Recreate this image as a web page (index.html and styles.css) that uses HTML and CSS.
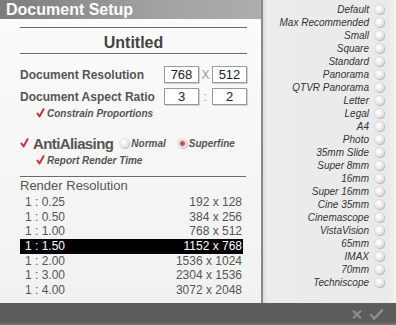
FILE: index.html
```html
<!DOCTYPE html>
<html lang="en">
<head>
<meta charset="UTF-8" />
<title>Document Setup</title>
<link rel="stylesheet" href="styles.css">
</head>
<body>
<div class="window">
  <div class="left">
    <div class="titlebar">Document Setup</div>
    <div class="setup">
      <div class="rule"></div>
      <div class="doc-name">Untitled</div>
      <div class="rule"></div>

      <div class="field-row first">
        <span class="label">Document Resolution</span>
        <span class="box">768</span>
        <span class="sep">X</span>
        <span class="box">512</span>
      </div>
      <div class="field-row">
        <span class="label">Document Aspect Ratio</span>
        <span class="box">3</span>
        <span class="sep">:</span>
        <span class="box">2</span>
      </div>
      <div class="option sub">
        <svg class="check" viewBox="0 0 9 10"><path d="M1.5 5.5 L3.5 8.5 L7.5 1.2"/></svg>
        <span>Constrain Proportions</span>
      </div>

      <div class="aa-row">
        <svg class="check" viewBox="0 0 9 10"><path d="M1.5 5.5 L3.5 8.5 L7.5 1.2"/></svg>
        <span class="aa-label">AntiAliasing</span>
        <span class="radio"></span><span class="opt">Normal</span>
        <span class="radio on"></span><span class="opt">Superfine</span>
      </div>
      <div class="option sub">
        <svg class="check" viewBox="0 0 9 10"><path d="M1.5 5.5 L3.5 8.5 L7.5 1.2"/></svg>
        <span>Report Render Time</span>
      </div>

      <div class="rule low"></div>
      <div class="res-title">Render Resolution</div>
      <ul class="res-list">
        <li><span>1 : 0.25</span><span>192 x 128</span></li>
        <li><span>1 : 0.50</span><span>384 x 256</span></li>
        <li><span>1 : 1.00</span><span>768 x 512</span></li>
        <li class="selected"><span>1 : 1.50</span><span>1152 x 768</span></li>
        <li><span>1 : 2.00</span><span>1536 x 1024</span></li>
        <li><span>1 : 3.00</span><span>2304 x 1536</span></li>
        <li><span>1 : 4.00</span><span>3072 x 2048</span></li>
      </ul>
    </div>
  </div>

  <ul class="presets">
    <li>Default<span class="radio"></span></li>
    <li>Max Recommended<span class="radio"></span></li>
    <li>Small<span class="radio"></span></li>
    <li>Square<span class="radio"></span></li>
    <li>Standard<span class="radio"></span></li>
    <li>Panorama<span class="radio"></span></li>
    <li>QTVR Panorama<span class="radio"></span></li>
    <li>Letter<span class="radio"></span></li>
    <li>Legal<span class="radio"></span></li>
    <li>A4<span class="radio"></span></li>
    <li>Photo<span class="radio"></span></li>
    <li>35mm Slide<span class="radio"></span></li>
    <li>Super 8mm<span class="radio"></span></li>
    <li>16mm<span class="radio"></span></li>
    <li>Super 16mm<span class="radio"></span></li>
    <li>Cine 35mm<span class="radio"></span></li>
    <li>Cinemascope<span class="radio"></span></li>
    <li>VistaVision<span class="radio"></span></li>
    <li>65mm<span class="radio"></span></li>
    <li>IMAX<span class="radio"></span></li>
    <li>70mm<span class="radio"></span></li>
    <li>Techniscope<span class="radio"></span></li>
  </ul>

  <div class="footer">
    <svg class="btn-icon" viewBox="0 0 12 12"><path d="M2 2 L10 10 M10 2 L2 10"/></svg>
    <svg class="btn-icon ok" viewBox="0 0 16 12"><path d="M2 6.5 L5.5 10.5 L14 1.5"/></svg>
  </div>
</div>
</body>
</html>
```

FILE: styles.css
```css
/* Base */
* {
  box-sizing: border-box;
}
body {
  margin: 0;
  width: 396px;
  height: 325px;
  overflow: hidden;
  font-family: "Liberation Sans", Arial, sans-serif;
  background: #5b5b5b;
}
ul {
  list-style: none;
  margin: 0;
  padding: 0;
}
.window {
  display: grid;
  grid-template-columns: 263px 133px;
  grid-template-rows: 303px 22px;
  height: 325px;
}

/* Left column */
.left {
  display: flex;
  flex-direction: column;
  border-right: 2px solid #8a8a8a;
}
.titlebar {
  height: 19px;
  line-height: 20px;
  padding-left: 6px;
  color: #fff;
  font-size: 16px;
  font-weight: 700;
  background: linear-gradient(90deg, #7c7c7c, #a2a2a2 60%, #adadad);
}
.setup {
  flex: 1;
  padding: 8px 14px 0 20px;
  background: linear-gradient(180deg, #fbfbfb, #f1f1f1);
  color: #555;
}
.rule {
  height: 1px;
  background: #6a6a6a;
  box-shadow: 0 1px 0 #fff;
}
.doc-name {
  height: 25px;
  padding-top: 5px;
  text-align: center;
  font-size: 16px;
  font-weight: 700;
  line-height: 20px;
  color: #444;
}

.field-row {
  display: flex;
  align-items: center;
  height: 17px;
  margin-top: 5px;
}
.field-row.first {
  margin-top: 12px;
}
.label {
  flex: 1;
  font-size: 12px;
  font-weight: 700;
}
.box {
  width: 35px;
  height: 17px;
  line-height: 15px;
  text-align: center;
  font-size: 13px;
  color: #222;
  background: #fff;
  border: 1px solid #9a9a9a;
  box-shadow: 1px 1px 0 #d0d0d0;
}
.sep {
  width: 13px;
  text-align: center;
  font-size: 12px;
  color: #999;
}

.option {
  display: flex;
  align-items: center;
  height: 14px;
  font-size: 10px;
  font-weight: 700;
  font-style: italic;
}
.option.sub {
  padding-left: 16px;
  margin-top: 1px;
}
.check {
  width: 9px;
  height: 10px;
  margin-right: 2px;
  fill: none;
  stroke: #c4323f;
  stroke-width: 2;
  stroke-linecap: round;
  stroke-linejoin: round;
}
.aa-row {
  display: flex;
  align-items: center;
  height: 18px;
  margin-top: 14px;
}
.aa-row .check {
  margin-right: 4px;
}
.aa-label {
  font-size: 15px;
  font-weight: 700;
  letter-spacing: -0.6px;
  margin-right: 7px;
}
.opt {
  font-size: 10px;
  font-weight: 700;
  font-style: italic;
  margin: 0 12px 0 2px;
}

.rule.low {
  margin-top: 9px;
  margin-right: 1px;
}
.res-title {
  height: 18px;
  line-height: 18px;
  font-size: 13px;
}
.res-list {
  margin-right: 4px;
}
.res-list li {
  display: flex;
  justify-content: space-between;
  height: 14.7px;
  line-height: 15px;
  padding: 0 1px 0 5px;
  font-size: 12px;
  color: #555;
}
.res-list li.selected {
  background: #000;
  color: #fff;
}

/* Radio buttons */
.radio {
  display: inline-block;
  width: 9px;
  height: 9px;
  border-radius: 50%;
  background: radial-gradient(circle at 40% 35%, #fff 0, #f4f4f4 35%, #c9c9c9 100%);
  box-shadow: 0 0 0 1px rgba(0, 0, 0, 0.08), 1px 1px 1px rgba(0, 0, 0, 0.15);
}
.radio.on {
  background: radial-gradient(circle at 50% 50%, #c8384a 0, #d65a68 30%, #eee 55%, #ccc 100%);
}

/* Right column */
.presets {
  padding-top: 3px;
  background: linear-gradient(90deg, #d9d9d9, #ececec 4px, #eaeaea 95%, #f6f6f6);
}
.presets li {
  display: flex;
  align-items: center;
  justify-content: flex-end;
  height: 13px;
  padding-right: 12px;
  font-size: 10px;
  font-style: italic;
  color: #333;
}
.presets .radio {
  margin-left: 6px;
}

/* Footer */
.footer {
  grid-column: 1 / span 2;
  display: flex;
  justify-content: flex-end;
  align-items: center;
  gap: 7px;
  padding-right: 12px;
  background: linear-gradient(180deg, #5c5c5c 85%, #7a7a7a);
}
.btn-icon {
  width: 10px;
  height: 11px;
  fill: none;
  stroke: #8e8e8e;
  stroke-width: 2.6;
  stroke-linecap: round;
}
.btn-icon.ok {
  width: 15px;
}
```
